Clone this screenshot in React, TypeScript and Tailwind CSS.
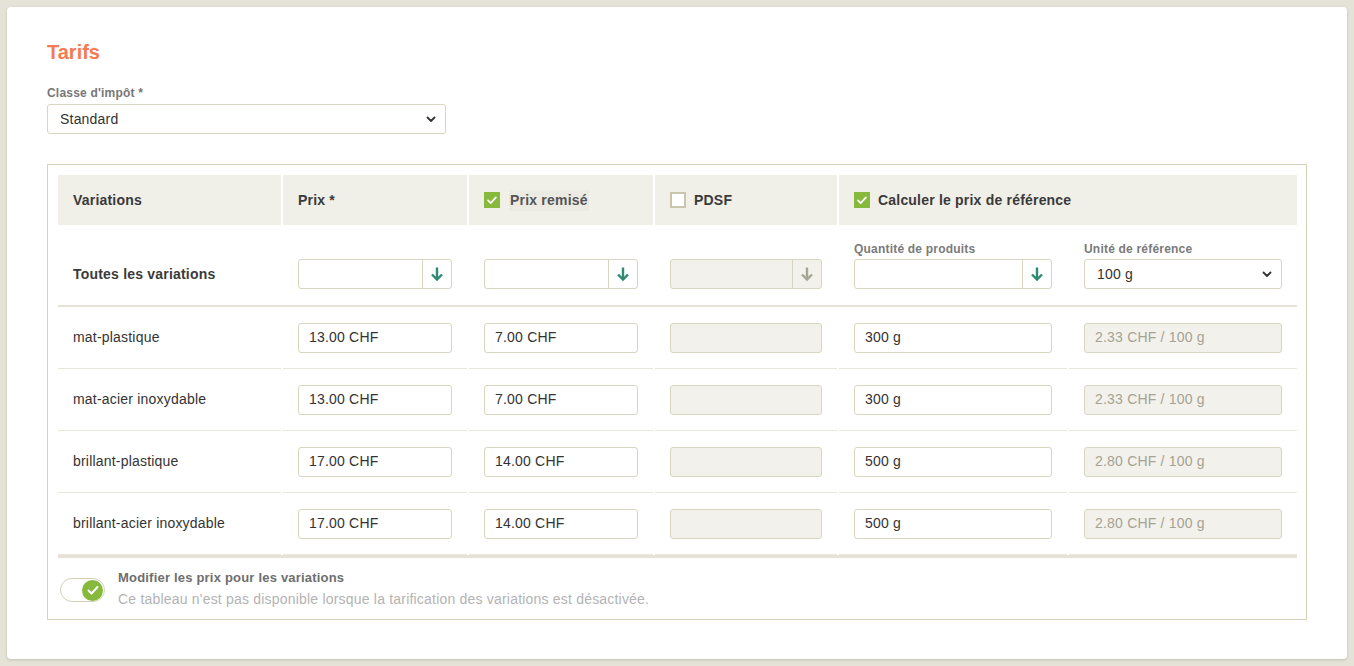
import React from "react";

const ArrowDown = ({ disabled = false }: { disabled?: boolean }) => (
  <svg className={`w-[14px] h-[16px] ${disabled ? "text-[#a7a595]" : "text-[#2e8a72]"}`} viewBox="0 0 14 16" fill="none" stroke="currentColor">
    <path d="M7 1.5v12M2 8.5l5 5 5-5" strokeWidth={2.4} strokeLinecap="butt" strokeLinejoin="miter" />
  </svg>
);

const Check = ({ className = "" }: { className?: string }) => (
  <svg className={className} viewBox="0 0 16 16" fill="none" stroke="currentColor">
    <path d="M3.5 8.5l3 3 6-6.5" strokeWidth={2} strokeLinecap="round" strokeLinejoin="round" />
  </svg>
);

const Chevron = () => (
  <svg className="w-3 h-3 text-[#333]" viewBox="0 0 12 12" fill="none" stroke="currentColor">
    <path d="M2.5 4.5L6 8l3.5-3.5" strokeWidth={1.8} strokeLinecap="round" strokeLinejoin="round" />
  </svg>
);

const Checkbox = ({ checked }: { checked: boolean }) =>
  checked ? (
    <span className="w-4 h-4 bg-[#86b93c] flex items-center justify-center shrink-0">
      <Check className="w-3.5 h-3.5 text-white" />
    </span>
  ) : (
    <span className="w-4 h-4 bg-white border-2 border-[#c9c6ad] shrink-0" />
  );

const TextInput = ({ value, disabled = false }: { value?: string; disabled?: boolean }) => (
  <div
    className={`h-[30px] rounded-[3px] border border-[#d8d5c0] flex items-center px-[10px] text-[14px] ${
      disabled ? "bg-[#f2f1eb] text-[#a5a394]" : "bg-white text-[#333]"
    }`}
  >
    {value}
  </div>
);

const ArrowInput = ({ disabled = false }: { disabled?: boolean }) => (
  <div className={`h-[30px] rounded-[3px] border border-[#d8d5c0] flex ${disabled ? "bg-[#f2f1eb]" : "bg-white"}`}>
    <div className="flex-1" />
    <div className="w-[29px] border-l border-[#d8d5c0] flex items-center justify-center">
      <ArrowDown disabled={disabled} />
    </div>
  </div>
);

const Select = ({ value }: { value: string }) => (
  <div className="h-[30px] rounded-[3px] border border-[#d8d5c0] bg-white flex items-center justify-between pl-[12px] pr-[8px] text-[14px] text-[#333]">
    <span>{value}</span>
    <Chevron />
  </div>
);

const rows = [
  { name: "mat-plastique", prix: "13.00 CHF", remise: "7.00 CHF", qty: "300 g", ref: "2.33 CHF / 100 g" },
  { name: "mat-acier inoxydable", prix: "13.00 CHF", remise: "7.00 CHF", qty: "300 g", ref: "2.33 CHF / 100 g" },
  { name: "brillant-plastique", prix: "17.00 CHF", remise: "14.00 CHF", qty: "500 g", ref: "2.80 CHF / 100 g" },
  { name: "brillant-acier inoxydable", prix: "17.00 CHF", remise: "14.00 CHF", qty: "500 g", ref: "2.80 CHF / 100 g" },
];

export default function App() {
  const cell = "h-[62px] px-[15px] border-b border-[#e9e7da] flex items-center";

  return (
    <div className="min-h-screen bg-[#e5e2d7] p-[7px] font-['Liberation_Sans',Arial,sans-serif] tracking-[0.2px]">
      <div className="bg-white rounded-[4px] shadow-[0_1px_3px_rgba(0,0,0,0.15)] px-[40px] pt-[31px] w-[1340px] h-[652px]">
        {/* Title */}
        <h2 className="text-[20px] font-bold text-[#f47a52] leading-[28px] tracking-normal">Tarifs</h2>

        {/* Tax class */}
        <div className="mt-[20px]">
          <div className="text-[12px] font-bold text-[#777] leading-[14px] mb-[4px]">Classe d'impôt *</div>
          <div className="w-[399px]">
            <Select value="Standard" />
          </div>
        </div>

        {/* Variations table */}
        <div className="mt-[30px] border border-[#d6d3bd] px-[8px] pt-[10px]">
          <div className="grid grid-cols-[223px_184px_184px_182px_228px_228px] gap-x-[2px] px-[2px]">
            {/* Header */}
            <div className="bg-[#f0efe8] h-[50px] px-[15px] flex items-center text-[14px] font-bold text-[#3a3a3a]">Variations</div>
            <div className="bg-[#f0efe8] h-[50px] px-[15px] flex items-center text-[14px] font-bold text-[#3a3a3a]">Prix *</div>
            <div className="bg-[#f0efe8] h-[50px] px-[15px] flex items-center gap-[9px] text-[14px] font-bold text-[#555]">
              <Checkbox checked />
              <span className="bg-[#ebeae3] px-[1px]">Prix remisé</span>
            </div>
            <div className="bg-[#f0efe8] h-[50px] px-[15px] flex items-center gap-[8px] text-[14px] font-bold text-[#3a3a3a]">
              <Checkbox checked={false} />
              PDSF
            </div>
            <div className="col-span-2 bg-[#f0efe8] h-[50px] px-[15px] flex items-center gap-[8px] text-[14px] font-bold text-[#3a3a3a]">
              <Checkbox checked />
              Calculer le prix de référence
            </div>

            {/* All variations row */}
            <div className="h-[80px] px-[15px] pt-[34px] text-[14px] font-bold text-[#3a3a3a]">
              <div className="h-[30px] flex items-center">Toutes les variations</div>
            </div>
            <div className="h-[80px] px-[15px] pt-[34px]">
              <ArrowInput />
            </div>
            <div className="h-[80px] px-[15px] pt-[34px]">
              <ArrowInput />
            </div>
            <div className="h-[80px] px-[15px] pt-[34px]">
              <ArrowInput disabled />
            </div>
            <div className="h-[80px] px-[15px] pt-[17px]">
              <div className="text-[12px] font-bold text-[#7a7a7a] leading-[14px] mb-[3px]">Quantité de produits</div>
              <ArrowInput />
            </div>
            <div className="h-[80px] px-[15px] pt-[17px]">
              <div className="text-[12px] font-bold text-[#7a7a7a] leading-[14px] mb-[3px]">Unité de référence</div>
              <Select value="100 g" />
            </div>
            <div className="col-span-6 h-[2px] bg-[#e6e3d6]" />

            {/* Data rows */}
            {rows.map((r) => (
              <React.Fragment key={r.name}>
                <div className={`${cell} text-[14px] text-[#333]`}>{r.name}</div>
                <div className={cell}>
                  <div className="w-full">
                    <TextInput value={r.prix} />
                  </div>
                </div>
                <div className={cell}>
                  <div className="w-full">
                    <TextInput value={r.remise} />
                  </div>
                </div>
                <div className={cell}>
                  <div className="w-full">
                    <TextInput disabled />
                  </div>
                </div>
                <div className={cell}>
                  <div className="w-full">
                    <TextInput value={r.qty} />
                  </div>
                </div>
                <div className={cell}>
                  <div className="w-full">
                    <TextInput value={r.ref} disabled />
                  </div>
                </div>
              </React.Fragment>
            ))}
            <div className="col-span-6 h-[3px] bg-[#e6e3d6]" />
          </div>

          {/* Toggle */}
          <div className="flex items-start gap-[13px] px-[4px] pt-[11px] pb-[10px]">
            <div className="mt-[9px] w-[45px] h-[24px] rounded-full border border-[#d3d0b8] bg-white flex items-center justify-end pr-[1px]">
              <span className="w-[21px] h-[21px] rounded-full bg-[#86b93c] flex items-center justify-center">
                <Check className="w-4 h-4 text-white" />
              </span>
            </div>
            <div>
              <div className="text-[13px] font-bold text-[#6e6e6e] leading-[18px]">Modifier les prix pour les variations</div>
              <div className="text-[14px] text-[#b3b3b3] leading-[20px] mt-[2px]">
                Ce tableau n'est pas disponible lorsque la tarification des variations est désactivée.
              </div>
            </div>
          </div>
        </div>
      </div>
    </div>
  );
}
